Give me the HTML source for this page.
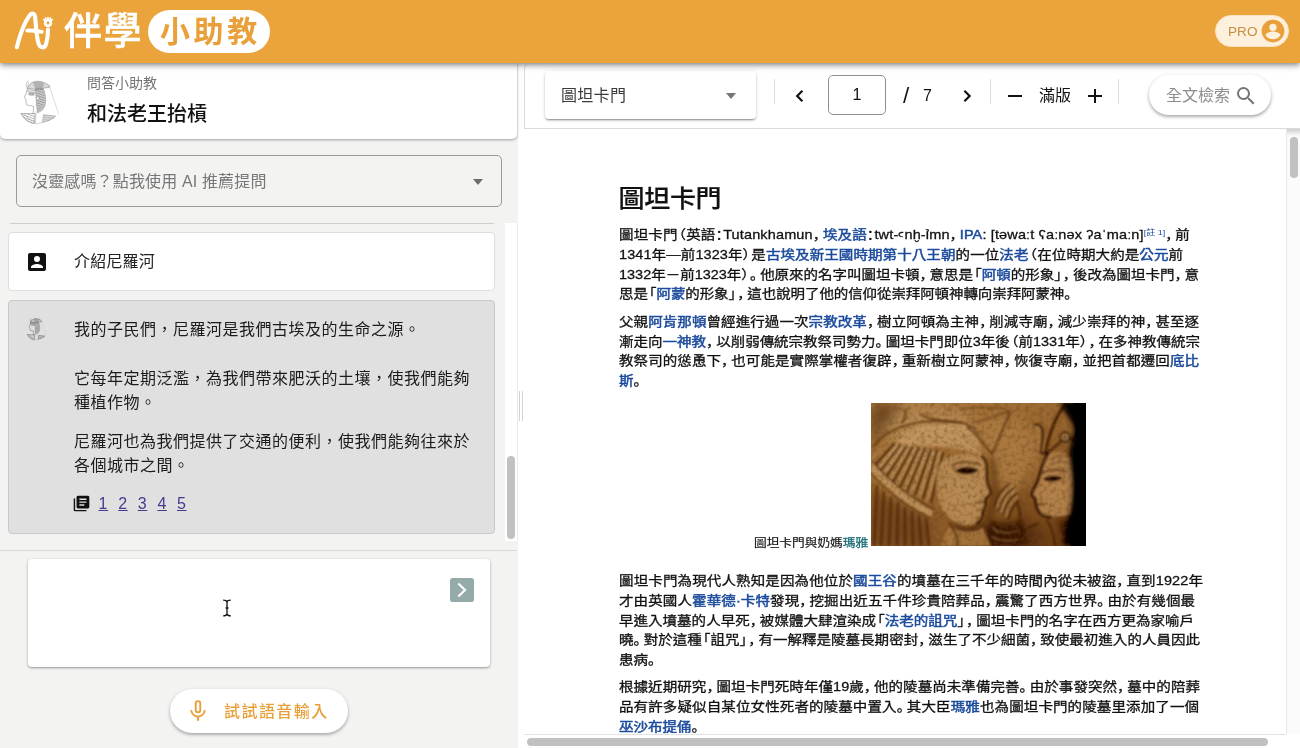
<!DOCTYPE html>
<html>
<head>
<meta charset="utf-8">
<title>AI 伴學小助教</title>
<style>
*{box-sizing:border-box}
html,body{margin:0;padding:0}
body{width:1300px;height:748px;overflow:hidden;background:#fff;position:relative;
 font-family:"Liberation Sans","Noto Sans CJK TC",sans-serif;color:#1a1a1a}
.abs{position:absolute}
/* ---------- header ---------- */
#hdr{position:absolute;left:0;top:0;width:1300px;height:63px;background:#eba43b;
 box-shadow:0 2px 4px -1px rgba(0,0,0,.3),0 4px 5px rgba(0,0,0,.16),0 1px 10px rgba(0,0,0,.14);z-index:10;will-change:transform}
#brand{position:absolute;left:64px;top:8px;font-size:38px;line-height:46px;color:#fff;font-weight:500;-webkit-text-stroke:.5px #fff;
 letter-spacing:1.5px;white-space:nowrap}
#pill{position:absolute;left:148px;top:10px;width:122px;height:43px;border-radius:22px;background:#fff;
 color:#e9a03a;font-weight:700;font-size:30px;line-height:43px;letter-spacing:3.6px;padding-left:12px;white-space:nowrap}
#pro{position:absolute;left:1215px;top:15px;width:74px;height:32px;border-radius:16px;background:#fdf0dc;
 border:1px solid #fbe3bd}
#pro span{position:absolute;left:12px;top:0;line-height:31px;font-size:13.6px;color:#c98d42;letter-spacing:0}
#pro svg{position:absolute;left:44px;top:2px}
/* ---------- left panel ---------- */
#left{position:absolute;left:0;top:63px;width:518px;height:685px;background:#f3f3f2;will-change:transform}
#tcard{position:absolute;left:0;top:0;width:517px;height:76px;background:#fff;border-radius:0 0 5px 5px;
 box-shadow:0 1px 3px rgba(0,0,0,.35);z-index:3}
#tcard .sub{position:absolute;left:87px;top:9.6px;font-size:14px;line-height:20px;color:#757575;white-space:nowrap}
#tcard .ttl{position:absolute;left:87px;top:35.8px;font-size:20px;line-height:30px;color:#111;font-weight:500;white-space:nowrap}
#sel{position:absolute;left:16px;top:92px;width:486px;height:52px;border:1px solid #9a9a9a;border-radius:5px}
#sel span{position:absolute;left:15px;top:14px;font-size:16px;line-height:24px;color:#777;white-space:nowrap;letter-spacing:.15px}
#sel i{position:absolute;left:456px;top:23px;width:0;height:0;border-left:5.5px solid transparent;border-right:5.5px solid transparent;border-top:6px solid #6e6e6e}
.hr{position:absolute;height:1px;background:#cfcfcf}
#strack{position:absolute;left:505px;top:160px;width:12.5px;height:318px;background:#fff}
#sthumb{position:absolute;left:507px;top:393px;width:8px;height:83px;border-radius:4px;background:#c1c1c1}
#ucard{position:absolute;left:8px;top:169px;width:487px;height:59px;background:#fff;border:1px solid #dedede;border-radius:4px}
#ucard span{position:absolute;left:65px;top:16.8px;font-size:16px;line-height:24px;color:#222;letter-spacing:.2px;white-space:nowrap}
#acard{position:absolute;left:8px;top:236.5px;width:487px;height:234px;background:#e0e0e0;border:1px solid #c9c9c9;border-radius:4px}
#acard p{position:absolute;left:65px;margin:0;font-size:16px;line-height:24px;color:#1c1c1c;letter-spacing:.5px;white-space:nowrap}
#acard .refs{position:absolute;left:89.6px;top:191.5px;font-size:16px;line-height:24px;white-space:nowrap;letter-spacing:.6px}
#acard .refs a{color:#48398d;text-decoration:underline;margin-right:10.1px}
#inp{position:absolute;left:28px;top:496px;width:462px;height:108px;background:#fff;border-radius:4px;
 box-shadow:0 1px 3px rgba(0,0,0,.3),0 1px 1px rgba(0,0,0,.12)}
#send{position:absolute;left:422px;top:19px;width:24px;height:24px;border-radius:2.5px;background:#94abaa}
#mic{position:absolute;left:170px;top:626px;width:178px;height:44px;border-radius:22px;background:#fff;
 box-shadow:0 2px 3px rgba(0,0,0,.22),0 1px 4px rgba(0,0,0,.12)}
#mic span{position:absolute;left:54px;top:10.8px;font-size:16px;line-height:24px;font-weight:500;color:#e8a03c;letter-spacing:1.45px;white-space:nowrap}
#mic svg{position:absolute;left:15.4px;top:9px;width:26px;height:26px}
/* ---------- right panel ---------- */
#tb{position:absolute;left:524px;top:63px;width:776px;height:66px;background:#fff;border-left:1px solid #dcdcdc;border-bottom:1px solid #dadada;border-top-left-radius:6px;will-change:transform}
#dsel{position:absolute;left:20px;top:8px;width:211px;height:48px;border-radius:4px;background:#fff;
 box-shadow:0 2px 2px -1px rgba(0,0,0,.3),0 1px 2px rgba(0,0,0,.16),0 1px 4px rgba(0,0,0,.10)}
#dsel span{position:absolute;left:16px;top:12.5px;font-size:16px;line-height:24px;color:#3a3a3a;letter-spacing:.3px;white-space:nowrap}
#dsel i{position:absolute;left:181px;top:22px;width:0;height:0;border-left:5.5px solid transparent;border-right:5.5px solid transparent;border-top:6px solid #757575}
.vd{position:absolute;top:16px;width:1px;height:25px;background:#dcdcdc}
#pg{position:absolute;left:303px;top:12px;width:58px;height:40px;border:1px solid #8f8f8f;border-radius:5px;
 text-align:center;font-size:16px;line-height:38px;color:#111}
.tbt{position:absolute;top:21px;font-size:16px;line-height:24px;color:#111;white-space:nowrap}
#srch{position:absolute;left:624px;top:12px;width:122px;height:40px;border-radius:20px;background:#fff;
 box-shadow:0 2px 3px rgba(0,0,0,.25),0 1px 5px rgba(0,0,0,.12)}
#srch span{position:absolute;left:17px;top:9.3px;font-size:16px;line-height:24px;color:#8c8c8c;white-space:nowrap}
#srch svg{position:absolute;left:85px;top:8.6px}
#doc{position:absolute;left:524px;top:129px;width:762px;height:605px;background:#fff;overflow:hidden}
#vtrack{position:absolute;left:1286px;top:129px;width:14px;height:605px;background:linear-gradient(#cfcfcf,#fbfbfb 7px);border-left:1px solid #e6e6e6}
#vthumb{position:absolute;left:1290px;top:137px;width:8px;height:41px;border-radius:4px;background:#c1c1c1}
#hline{position:absolute;left:524px;top:734px;width:762px;height:1px;background:#e2e2e2}
#hthumb{position:absolute;left:527px;top:738px;width:741px;height:8px;border-radius:4px;background:#c1c1c1}
/* doc text (absolute in body coords) */
#h1{position:absolute;left:618.5px;top:180.5px;font-size:26px;line-height:36px;color:#111;font-weight:500;white-space:nowrap;letter-spacing:-.3px;-webkit-text-stroke:.25px #111;transform:scaleY(.93);transform-origin:0 50%}
.ln{position:absolute;left:619px;height:20px;line-height:20px;font-size:14.5px;color:#111;white-space:nowrap;-webkit-text-stroke:.32px #111;transform:scaleY(.885);transform-origin:0 50%}
.ln a,.cap a{color:#1c4b9c;-webkit-text-stroke:.55px #1c4b9c}
.ln sup{font-size:9px;color:#1c4b9c;vertical-align:baseline;position:relative;top:-5px;letter-spacing:0;-webkit-text-stroke:0}
.pc,.po,.pe,.pk{font-family:"Noto Sans CJK SC",sans-serif;font-feature-settings:"halt";display:inline-block}
.ln .pc{width:.7em}
.ln .pk{width:.53em}
.ln .po{width:.6em;text-align:right}
.ln .pe{width:.6em}
.cap{position:absolute;left:754px;top:534.4px;font-size:12.7px;line-height:18px;color:#111;white-space:nowrap;-webkit-text-stroke:.2px #111;transform:scaleY(.885);transform-origin:0 50%}
.cap a{color:#1f6f78;-webkit-text-stroke:.3px #1f6f78}
#relief{position:absolute;left:871px;top:403px;width:215px;height:143px}
</style>
</head>
<body>
<!-- ================= header ================= -->
<div id="hdr">
  <svg class="abs" style="left:0;top:0" width="60" height="63" viewBox="0 0 60 63" fill="none" stroke="#fff" stroke-linecap="round" stroke-linejoin="round">
    <path stroke-width="4.1" d="M16.8 47.2C19.5 36.5 24.5 22 29.8 15.2C32 12.4 34.6 13.2 35.1 17C36.1 26 36.3 36 38.4 43C40 48.6 44.6 48.6 46.1 44C47.6 39 48 34 48 29.6"/>
    <path stroke-width="3.9" d="M27.3 30.6C32 30.3 37 31 41.8 31.8"/>
    <circle cx="48" cy="23" r="2.85" stroke-width="2.8"/>
    <path stroke-width="1.7" d="M44.6 20.4L43.7 19.6M46 19.2L45.5 18M48 18.8V17.5M50 19.2L50.5 18M51.4 20.4L52.3 19.6"/>
  </svg>

  <div id="brand">伴學</div>
  <div id="pill">小助教</div>
  <div id="pro"><span>PRO</span>
    <svg width="26" height="26" viewBox="0 0 24 24"><path fill="#e9a03a" d="M12 1.5A10.5 10.5 0 1 0 12 22.500001A10.5 10.5 0 1 0 12 1.5zM12 5.2a3.4 3.4 0 1 1 0 6.8a3.4 3.4 0 0 1 0-6.8zM12 19.6c-2.9 0-5.4-1.5-6.9-3.7c.05-2.3 4.6-3.5 6.9-3.5s6.85 1.2 6.9 3.5c-1.5 2.2-4 3.7-6.9 3.7z"/></svg>
  </div>
</div>

<!-- ================= left panel ================= -->
<div id="left">
  <div id="tcard">
    <svg class="abs" style="left:18px;top:15px" width="44" height="48" viewBox="18 78 44 48" fill="none" stroke="#7a7a7a" stroke-width=".5" stroke-linecap="round">
      <defs>
        <pattern id="hA" width="2" height="2" patternUnits="userSpaceOnUse" patternTransform="rotate(58)"><path d="M0 1H2" stroke="#757575" stroke-width=".55"/></pattern>
        <pattern id="hB" width="1.7" height="1.7" patternUnits="userSpaceOnUse" patternTransform="rotate(98)"><path d="M0 .8H1.7" stroke="#666" stroke-width=".6"/></pattern>
        <pattern id="hC" width="2.3" height="2.3" patternUnits="userSpaceOnUse" patternTransform="rotate(20)"><path d="M0 1.1H2.3" stroke="#777" stroke-width=".5"/></pattern>
        <filter id="wob" filterUnits="userSpaceOnUse" x="18" y="78" width="44" height="48"><feTurbulence type="fractalNoise" baseFrequency=".45" numOctaves="2" seed="3" result="t"/><feDisplacementMap in="SourceGraphic" in2="t" scale="1.4" xChannelSelector="R" yChannelSelector="G"/></filter>
      </defs>
      <g id="avG" filter="url(#wob)">
      <path d="M26.3 87.3C26 85.5 26.3 83 27.6 80.9C28.4 82.2 28.3 84.5 28 86.5" stroke="#9d9d9d"/>
      <path fill="url(#hA)" d="M27.4 88.2C28.5 84.8 32 81.6 36.5 81.3C41 81 46 82.5 48.6 85.4C49.4 86.4 49.2 87.6 48 87.7C45 87.6 43.5 88 42.6 89.5L36 89.3C33 89.4 30 88.8 27.4 88.2Z"/>
      <path fill="url(#hB)" stroke="none" d="M33 82.5C36 81 41 81.5 44 83.500L43 88.500L35.5 89Z"/>
      <path d="M27.3 89.8L35.4 90.7M27.2 91.7L35.2 92.3"/>
      <path d="M27.4 89.5C26.8 91.5 26.2 93.5 25.3 95.3C24.7 96.5 24.1 97.3 24.3 98C24.6 98.5 25.4 98.6 25.8 99C25.6 99.6 25.7 100.2 26.2 100.5C25.9 101.1 25.9 101.7 26.3 102.1C26 103.3 26 104.4 26.9 104.9C28.8 105.5 31.5 105.6 33.6 106.3C33.8 108.5 33.5 111 33 113.4"/>
      <path d="M28.7 93.3C30.5 92.6 32.5 92.7 34.3 93.4M28.9 94.6C30.6 95.4 32.6 95.4 34.2 94.8" stroke="#666" stroke-width=".6"/>
      <path d="M29.5 94H33.5" stroke="#777" stroke-width=".8"/>
      <path fill="url(#hB)" d="M35.4 89.2C36 96 36.2 104 37.5 112.7C42 111.5 45.5 107.5 45.6 101C45.7 96 45 91 42.8 88.5C40.5 87.8 37.5 88.2 35.4 89.2Z" stroke="#858585"/>
      <path fill="url(#hC)" stroke="none" d="M36 90C36.5 97 36.8 104 38 111.500C41.5 110 44.5 106.5 44.8 101C45 96 44 92 42.5 89.500Z"/>
      <ellipse cx="37.9" cy="98.3" rx="1.3" ry="1.9" fill="#fff" stroke="#888"/>
      <path d="M49.5 86.6L58.7 114.3" stroke="#a8a8a8" stroke-width=".4"/>
      <path d="M48 85C49.3 84.4 50.3 85.3 50 86.7C49.6 87.8 48.4 88 47.7 87.4" stroke="#aaa"/>
      <path fill="url(#hC)" d="M21.3 113.5H35.2L34.4 123.6C28 122.5 23.5 119 21.3 113.5Z"/>
      <path d="M22.5 115.5C25 120 29.5 122.3 34.4 123M24.5 113.7C26.5 118 30 120.3 34.6 121" stroke="#9a9a9a"/>
      <path fill="url(#hA)" d="M43.9 114.8L55.7 116.2C52.5 119 48 121.3 43 122.3Z"/>
      <path d="M44.2 117.2L53.3 118.2M43.7 119.6L49.5 120.3" stroke="#999"/>
      <path d="M36.1 111.7L35.3 123.6M35.8 123.8L43 122.3" stroke="#aaa"/>
      </g>
    </svg>

    <div class="sub">問答小助教</div>
    <div class="ttl">和法老王抬槓</div>
  </div>
  <div id="sel"><span>沒靈感嗎？點我使用 AI 推薦提問</span><i></i></div>
  <div class="hr" style="left:10px;top:160px;width:484px"></div>
  <div id="strack"></div><div class="abs" style="left:517px;top:160px;width:1px;height:318px;background:#ebebeb"></div><div id="sthumb"></div>
  <div id="ucard">
    <svg class="abs" style="left:16px;top:17px" width="24" height="24" viewBox="0 0 24 24"><path fill="#111" d="M6 17c0-2 4-3.1 6-3.1s6 1.1 6 3.1v1H6m9-9a3 3 0 0 1-3 3a3 3 0 0 1-3-3a3 3 0 0 1 3-3a3 3 0 0 1 3 3M3 5v14a2 2 0 0 0 2 2h14a2 2 0 0 0 2-2V5a2 2 0 0 0-2-2H5a2 2 0 0 0-2 2z"/></svg>
    <span>介紹尼羅河</span>
  </div>
  <div id="acard">
    <svg id="av2" class="abs" style="left:17px;top:16px" width="22" height="24" viewBox="18 78 44 48" fill="none" stroke="#555" stroke-width=".9" stroke-linecap="round"><use href="#avG"/></svg>
    <p style="top:17px">我的子民們，尼羅河是我們古埃及的生命之源。</p>
    <p style="top:66px">它每年定期泛濫，為我們帶來肥沃的土壤，使我們能夠</p>
    <p style="top:90px">種植作物。</p>
    <p style="top:129px">尼羅河也為我們提供了交通的便利，使我們能夠往來於</p>
    <p style="top:153px">各個城市之間。</p>
    <svg class="abs" style="left:63.5px;top:194.5px" width="17" height="17" viewBox="0 0 24 24"><path fill="#111" d="M16 15H9v-2h7m3-2H9V9h10m0-2H9V5h10m2-4H7a2 2 0 0 0-2 2v14a2 2 0 0 0 2 2h14a2 2 0 0 0 2-2V3a2 2 0 0 0-2-2M3 5v16h16v2H3a2 2 0 0 1-2-2V5z"/></svg>
    <div class="refs"><a>1</a><a>2</a><a>3</a><a>4</a><a>5</a></div>
  </div>
  <div class="hr" style="left:0;top:487px;width:517px;background:#d9d9d9"></div>
  <div id="inp">
    <div id="send"><svg width="24" height="24" viewBox="0 0 24 24"><path d="M8.3 5.5L15 12L8.3 18.5" fill="none" stroke="#fff" stroke-width="2.3"/></svg></div>
    <svg class="abs" style="left:194px;top:40px" width="10" height="18" viewBox="0 0 10 18"><path d="M1.2 1.2C3 1.2 4.6 1.6 5 3C5.4 1.6 7 1.2 8.8 1.2M5 3V15M1.2 16.8C3 16.8 4.6 16.4 5 15C5.4 16.4 7 16.8 8.8 16.8M3.6 9H6.4" fill="none" stroke="#111" stroke-width="1.3"/></svg>
  </div>
  <div id="mic">
    <svg width="24" height="24" viewBox="0 0 24 24"><path fill="#e8a03c" d="M17.3 11c0 3-2.54 5.1-5.3 5.1S6.7 14 6.7 11H5c0 3.4 2.72 6.23 6 6.72V21h2v-3.28c3.28-.49 6-3.32 6-6.72M10.8 4.9c0-.66.54-1.2 1.2-1.2s1.2.54 1.2 1.2l-.01 6.2c0 .66-.53 1.2-1.19 1.2s-1.2-.54-1.2-1.2M12 14a3 3 0 0 0 3-3V5a3 3 0 0 0-3-3a3 3 0 0 0-3 3v6a3 3 0 0 0 3 3z"/></svg>
    <span>試試語音輸入</span>
  </div>
</div>
<!-- splitter handle -->
<div class="abs" style="left:519px;top:391px;width:1px;height:30px;background:#d4d4d4"></div>
<div class="abs" style="left:522px;top:391px;width:1px;height:30px;background:#d4d4d4"></div>

<!-- ================= right panel ================= -->
<div id="tb">
  <div id="dsel"><span>圖坦卡門</span><i></i></div>
  <div class="vd" style="left:249px"></div>
  <svg class="abs" style="left:263px;top:21px" width="24" height="24" viewBox="0 0 24 24"><path d="M14.4 6.8L9.2 12L14.4 17.2" fill="none" stroke="#111" stroke-width="2.2"/></svg>
  <div id="pg">1</div>
  <div class="tbt" style="left:379.4px;top:20.6px;transform:scale(1.4,1.38)">/</div>
  <div class="tbt" style="left:398px">7</div>
  <svg class="abs" style="left:430px;top:21px" width="24" height="24" viewBox="0 0 24 24"><path d="M9.4 6.8L14.6 12L9.4 17.2" fill="none" stroke="#111" stroke-width="2.2"/></svg>
  <div class="vd" style="left:465px"></div>
  <div class="abs" style="left:483px;top:32px;width:14px;height:2px;background:#111"></div>
  <div class="tbt" style="left:514px">滿版</div>
  <div class="abs" style="left:563px;top:32px;width:14px;height:2px;background:#111"></div>
  <div class="abs" style="left:569px;top:26px;width:2px;height:14px;background:#111"></div>
  <div class="vd" style="left:593px"></div>
  <div id="srch"><span>全文檢索</span>
    <svg width="24" height="24" viewBox="0 0 24 24"><path fill="#757575" d="M9.5 3A6.5 6.5 0 0 1 16 9.5c0 1.61-.59 3.09-1.56 4.23l.27.27h.79l5 5l-1.5 1.5l-5-5v-.79l-.27-.27A6.516 6.516 0 0 1 9.5 16A6.5 6.5 0 0 1 3 9.5A6.5 6.5 0 0 1 9.5 3m0 2C7 5 5 7 5 9.5S7 14 9.5 14S14 12 14 9.5S12 5 9.5 5z"/></svg>
  </div>
</div>
<div id="doc"></div>
<div id="vtrack"></div><div id="vthumb"></div>
<div id="hline"></div><div id="hthumb"></div>

<div id="h1">圖坦卡門</div>
<div class="ln" id="ln0" style="top:224.3px;letter-spacing:0.132px">圖坦卡門<span class="po">（</span>英語<span class="pk">：</span>Tutankhamun<span class="pc">，</span><a>埃及語</a><span class="pk">：</span>twt-ꜥnḫ-ỉmn<span class="pc">，</span><a>IPA</a>: [təwaːt ʕaːnəx ʔaˈmaːn]<sup>[註 1]</sup><span class="pc">，</span>前</div>
<div class="ln" id="ln1" style="top:244.0px;letter-spacing:0.090px">1341年—前1323年<span class="pe">）</span>是<a>古埃及新王國時期第十八王朝</a>的一位<a>法老</a><span class="po">（</span>在位時期大約是<a>公元</a>前</div>
<div class="ln" id="ln2" style="top:263.7px;letter-spacing:-0.017px">1332年－前1323年<span class="pe">）</span><span class="pc">。</span>他原來的名字叫圖坦卡頓<span class="pc">，</span>意思是<span class="po">「</span><a>阿頓</a>的形象<span class="pe">」</span><span class="pc">，</span>後改為圖坦卡門<span class="pc">，</span>意</div>
<div class="ln" id="ln3" style="top:283.4px;letter-spacing:-0.095px">思是<span class="po">「</span><a>阿蒙</a>的形象<span class="pe">」</span><span class="pc">，</span>這也說明了他的信仰從崇拜阿頓神轉向崇拜阿蒙神<span class="pc">。</span></div>
<div class="ln" id="ln4" style="top:311.0px;letter-spacing:0.082px">父親<a>阿肯那頓</a>曾經進行過一次<a>宗教改革</a><span class="pc">，</span>樹立阿頓為主神<span class="pc">，</span>削減寺廟<span class="pc">，</span>減少崇拜的神<span class="pc">，</span>甚至逐</div>
<div class="ln" id="ln5" style="top:330.7px;letter-spacing:-0.004px">漸走向<a>一神教</a><span class="pc">，</span>以削弱傳統宗教祭司勢力<span class="pc">。</span>圖坦卡門即位3年後<span class="po">（</span>前1331年<span class="pe">）</span><span class="pc">，</span>在多神教傳統宗</div>
<div class="ln" id="ln6" style="top:350.4px;letter-spacing:0.082px">教祭司的慫恿下<span class="pc">，</span>也可能是實際掌權者復辟<span class="pc">，</span>重新樹立阿蒙神<span class="pc">，</span>恢復寺廟<span class="pc">，</span>並把首都遷回<a>底比</a></div>
<div class="ln" id="ln7" style="top:370.1px;letter-spacing:0.000px"><a>斯</a><span class="pc">。</span></div>
<div class="ln" id="ln8" style="top:570.2px;letter-spacing:0.127px">圖坦卡門為現代人熟知是因為他位於<a>國王谷</a>的墳墓在三千年的時間內從未被盜<span class="pc">，</span>直到1922年</div>
<div class="ln" id="ln9" style="top:589.9px;letter-spacing:0.114px">才由英國人<a>霍華德·卡特</a>發現<span class="pc">，</span>挖掘出近五千件珍貴陪葬品<span class="pc">，</span>震驚了西方世界<span class="pc">。</span>由於有幾個最</div>
<div class="ln" id="ln10" style="top:609.6px;letter-spacing:0.023px">早進入墳墓的人早死<span class="pc">，</span>被媒體大肆渲染成<span class="po">「</span><a>法老的詛咒</a><span class="pe">」</span><span class="pc">，</span>圖坦卡門的名字在西方更為家喻戶</div>
<div class="ln" id="ln11" style="top:629.3px;letter-spacing:0.030px">曉<span class="pc">。</span>對於這種<span class="po">「</span>詛咒<span class="pe">」</span><span class="pc">，</span>有一解釋是陵墓長期密封<span class="pc">，</span>滋生了不少細菌<span class="pc">，</span>致使最初進入的人員因此</div>
<div class="ln" id="ln12" style="top:649.0px;letter-spacing:0.000px">患病<span class="pc">。</span></div>
<div class="ln" id="ln13" style="top:676.3px;letter-spacing:0.062px">根據近期研究<span class="pc">，</span>圖坦卡門死時年僅19歲<span class="pc">，</span>他的陵墓尚未準備完善<span class="pc">。</span>由於事發突然<span class="pc">，</span>墓中的陪葬</div>
<div class="ln" id="ln14" style="top:696.0px;letter-spacing:0.115px">品有許多疑似自某位女性死者的陵墓中置入<span class="pc">。</span>其大臣<a>瑪雅</a>也為圖坦卡門的陵墓里添加了一個</div>
<div class="ln" id="ln15" style="top:715.7px;letter-spacing:0.000px"><a>巫沙布提俑</a><span class="pc">。</span></div>
<div class="cap">圖坦卡門與奶媽<a>瑪雅</a></div>
<div id="relief"><svg width="215" height="143" viewBox="0 0 215 143">
  <defs>
    <linearGradient id="rg0" x1="0" y1="0" x2="1" y2="1"><stop offset="0" stop-color="#bd8f52"/><stop offset=".5" stop-color="#a6753b"/><stop offset="1" stop-color="#7a4c20"/></linearGradient>
    <filter id="b1" filterUnits="userSpaceOnUse" x="-20" y="-20" width="255" height="183"><feGaussianBlur stdDeviation="1"/></filter>
    <filter id="b3" filterUnits="userSpaceOnUse" x="-20" y="-20" width="255" height="183"><feGaussianBlur stdDeviation="3.2"/></filter>
    <filter id="b6" filterUnits="userSpaceOnUse" x="-30" y="-30" width="275" height="203"><feGaussianBlur stdDeviation="7"/></filter>
    <filter id="grain" filterUnits="userSpaceOnUse" x="0" y="0" width="215" height="143"><feTurbulence type="fractalNoise" baseFrequency=".22" numOctaves="3" seed="7" result="n"/><feColorMatrix in="n" type="matrix" values="0 0 0 0 .2  0 0 0 0 .1  0 0 0 0 .02  0 0 0 2.2 -.95"/></filter>
    <filter id="ctr" color-interpolation-filters="sRGB" filterUnits="userSpaceOnUse" x="0" y="0" width="215" height="143"><feComponentTransfer><feFuncR type="linear" slope="1.35" intercept="-.2"/><feFuncG type="linear" slope="1.35" intercept="-.15"/><feFuncB type="linear" slope="1.35" intercept="-.08"/></feComponentTransfer></filter>
    <clipPath id="rc"><rect width="215" height="143"/></clipPath>
  </defs>
  <g clip-path="url(#rc)"><g filter="url(#ctr)">
    <rect width="215" height="143" fill="url(#rg0)"/>
    <!-- broad light / shade -->
    <g filter="url(#b6)">
      <ellipse cx="55" cy="22" rx="50" ry="14" fill="#d0a86e" opacity=".55"/>
      <path d="M0 0H34L0 46Z" fill="#6a4119" opacity=".75"/>
      <ellipse cx="140" cy="52" rx="28" ry="36" fill="#bb8c50" opacity=".8"/>
      <ellipse cx="28" cy="122" rx="42" ry="28" fill="#946533" opacity=".8"/>
      <ellipse cx="134" cy="134" rx="40" ry="14" fill="#5d3a17" opacity=".8"/>
    </g>
    <!-- medium soft shapes -->
    <g filter="url(#b3)">
      <ellipse cx="92" cy="92" rx="14" ry="16" fill="#cda469" opacity=".6"/>
      <path d="M120 54C124 66 122 78 125 88C124 96 120 106 117 118" fill="none" stroke="#5a3412" stroke-width="5" opacity=".75"/>
      <path d="M84 121C92 128 104 128 113 121L116 132C104 136 90 134 82 128Z" fill="#4a2a0e" opacity=".75"/>
      <path d="M0 78C14 96 36 112 58 120L60 143H0Z" fill="#7a4c20" opacity=".55"/>
      <path d="M160 60C158 74 154 86 150 96C154 104 158 112 164 118L150 128L146 96Z" fill="#7c4e22" opacity=".5"/>
      <path d="M70 104C74 112 82 118 92 122" fill="none" stroke="#6a421b" stroke-width="3" opacity=".5"/>
      <path d="M118 118C126 122 140 124 152 116L156 143H114Z" fill="#4a2a0e" opacity=".9"/>
      <ellipse cx="184" cy="92" rx="11" ry="13" fill="#cfa468" opacity=".5"/>
      <path d="M186 118C190 124 192 134 190 143H202L200 116Z" fill="#3a2009" opacity=".7"/>
      <path d="M191 0C195 8 203 16 206 26C202 40 199 52 201 64C204 84 202 104 198 120C196 130 196 136 197 143H225V0Z" fill="#0d0703" opacity=".97"/>
    </g>
    <!-- fine carving -->
    <g filter="url(#b1)" fill="none">
      <path d="M26 33C45 22 80 18 100 24C106 30 110 42 110 52C90 44 55 40 28 44Z" fill="#cfa56a" opacity=".8"/>
      <path d="M2 44C8 36 18 28 30 24C45 18 70 16 92 20" stroke="#70461d" stroke-width="2.2" opacity=".8"/>
      <path d="M50 12C60 17 75 19 92 20C98 22 104 26 108 32" stroke="#6b421b" stroke-width="2" opacity=".7"/>
      <path d="M34 7C36 12 34 17 30 20" stroke="#5f3915" stroke-width="1.8" opacity=".8"/>
      <g stroke="#55300f" stroke-width="1.9" opacity=".9">
        <path d="M24 40L4 62"/><path d="M30 41L9 68"/><path d="M36 42L15 74"/><path d="M42 43L22 79"/><path d="M48 44L29 84"/><path d="M54 45L36 88"/>
        <path d="M60 46L44 92"/><path d="M66 47L52 96"/><path d="M72 49L60 100"/><path d="M78 52L68 95"/>
      </g>
      <g stroke="#dfbc84" stroke-width="1.4" opacity=".75">
        <path d="M27 41L7 66"/><path d="M33 42L12 72"/><path d="M39 43L19 77"/><path d="M45 44L26 82"/><path d="M51 45L33 87"/><path d="M57 46L40 91"/><path d="M63 47L48 95"/><path d="M69 49L56 98"/>
      </g>
      <path d="M2 60C18 78 40 96 62 108L60 114C38 104 16 86 0 68Z" fill="#c89d62" opacity=".95"/>
      <path d="M2 59C18 77 40 95 63 107" stroke="#5b3714" stroke-width="1.6" opacity=".85"/>
      <path d="M0 70C16 88 38 105 60 115" stroke="#684019" stroke-width="1.4" opacity=".8"/>
      <g stroke="#55300f" stroke-width="1.9" opacity=".8">
        <path d="M6 82L3 143"/><path d="M13 88L10 143"/><path d="M20 94L18 143"/><path d="M27 99L26 143"/><path d="M34 104L34 143"/><path d="M41 108L42 143"/><path d="M48 112L50 143"/><path d="M55 115L58 143"/>
      </g>
      <!-- left face -->
      <path d="M70 60C78 50 100 48 112 54C118 60 114 72 116 80C118 86 121 90 117 93C114 95 113 97 114 100C115 104 112 106 111 109C112 114 108 120 100 122C88 124 76 116 70 104C64 92 64 70 70 60Z" fill="#c5995e" opacity=".9"/>
      <path d="M110 53C118 58 115 70 116 79C118 86 122 90 117 93.5C114 95 113.5 97 114.5 100C115 104 112 106 111.5 109C112 113 110 117 105 121" stroke="#3a1f08" stroke-width="2.6" opacity=".9"/>
      <path d="M84 68C90 63 100 63 108 67C102 72 92 73 84 68Z" fill="#2e1706" opacity=".95"/>
      <path d="M80 63C88 58 100 58 110 62" stroke="#5b3614" stroke-width="1.8" opacity=".75"/>
      <path d="M104 99C107 100 110 100 113 99" stroke="#55320f" stroke-width="1.5" opacity=".7"/>
      <path d="M78 122L70 143H120L112 124C104 130 88 130 78 122Z" fill="#b58648" opacity=".9"/>
      <path d="M78 121C84 128 88 134 86 143" stroke="#54310f" stroke-width="2" opacity=".7"/>
      <!-- V carving -->
      <path d="M101 22L121 48L137 11C126 16 112 19 101 22Z" fill="#b98a4d" opacity=".6"/>
      <path d="M96 24C104 30 112 40 121 51L139 9" stroke="#6a411a" stroke-width="2" opacity=".8"/>
      <path d="M100 20C108 18 126 14 139 8C130 4 110 4 90 6" stroke="#7a4e22" stroke-width="1.6" opacity=".7"/>
      <!-- hand / fingers -->
      <g stroke="#4f2e0f" stroke-width="1.9" opacity=".85">
        <path d="M124 104C126 94 131 86 139 81"/><path d="M128 108C130 98 135 90 143 85"/><path d="M132 112C134 102 139 95 146 90"/><path d="M137 116C139 108 143 101 148 97"/>
        <path d="M122 118C126 124 128 132 126 143"/><path d="M146 100C150 108 150 118 146 130"/>
      </g>
      <g stroke="#d9b47a" stroke-width="1.5" opacity=".7">
        <path d="M126 105C128 96 133 88 141 83"/><path d="M130 110C132 100 137 92 144.5 87.5"/><path d="M134.5 114C136.5 105 141 98 147 93.5"/>
      </g>
      <g stroke="#d0a86c" stroke-width="1.3" opacity=".55">
        <path d="M122 126C128 130 138 131 146 128"/><path d="M120 134C128 138 140 139 148 136"/>
      </g>
      <!-- right face -->
      <path d="M176 52C170 60 170 70 167 78C165 84 160 89 161 92C162 94 165 95 165 97C164 99 165 101 166 102C165 104 166 106 168 108C169 112 174 114 180 114L200 112C204 96 204 72 200 54C192 48 182 48 176 52Z" fill="#c09056" opacity=".92"/>
      <path d="M178 50C171 58 170 70 167 78C165 84 160 89 161 92C162 94 165 95 165 97C164 99 165 101 166 102C165 104 166 106 168 108C169 112 174 114 181 114" stroke="#301805" stroke-width="2.6" opacity=".92"/>
      <path d="M172 76C178 72 186 72 192 75C186 79 178 80 172 76Z" fill="#2a1405" opacity=".95"/>
      <path d="M171 70C178 66 188 66 196 69" stroke="#54310f" stroke-width="1.8" opacity=".75"/>
      <path d="M166 101C169 102 172 102 175 100" stroke="#4a2a0d" stroke-width="1.4" opacity=".7"/>
      <path d="M176 116C180 124 184 134 184 143M168 120L150 128" stroke="#4a2a0d" stroke-width="2" opacity=".7"/>
      <!-- crown / uraeus -->
      <path d="M196 0C186 10 178 30 174 52" stroke="#3a1f08" stroke-width="2.4" opacity=".85"/>
      <path d="M163 22C168 20 172 24 172 30C172 38 168 46 170 50C176 52 184 44 190 38C194 34 200 34 203 38" stroke="#4a2a0d" stroke-width="2.2" opacity=".85"/>
      <path d="M166 24C169 30 168 40 167 48" stroke="#d4ad72" stroke-width="1.3" opacity=".6"/>
      <circle cx="194" cy="34" r="4.5" fill="#c69a5e" stroke="#3a1f08" stroke-width="1.8" opacity=".9"/>
      <circle cx="194" cy="34" r="1.5" fill="#2a1505" opacity=".9"/>
      <path d="M180 56C186 52 196 52 202 56M178 62C186 58 196 58 204 62" stroke="#6a411a" stroke-width="1.6" opacity=".6"/>
    </g>
    <rect width="215" height="143" filter="url(#grain)" opacity=".5"/>
    <rect width="215" height="143" fill="#5a3210" opacity=".2"/>
    <path d="M191 0C195 8 203 16 206 26C202 40 199 52 201 64C204 84 202 104 198 120C196 130 196 136 197 143H225V0Z" fill="#0d0703" opacity=".8" filter="url(#b3)"/>
    <path d="M203 0H215V143H201C205 120 207 90 206 60C206 40 207 20 203 0Z" fill="#050302" filter="url(#b1)"/>
  </g></g>
</svg>
</div>
</body>
</html>
